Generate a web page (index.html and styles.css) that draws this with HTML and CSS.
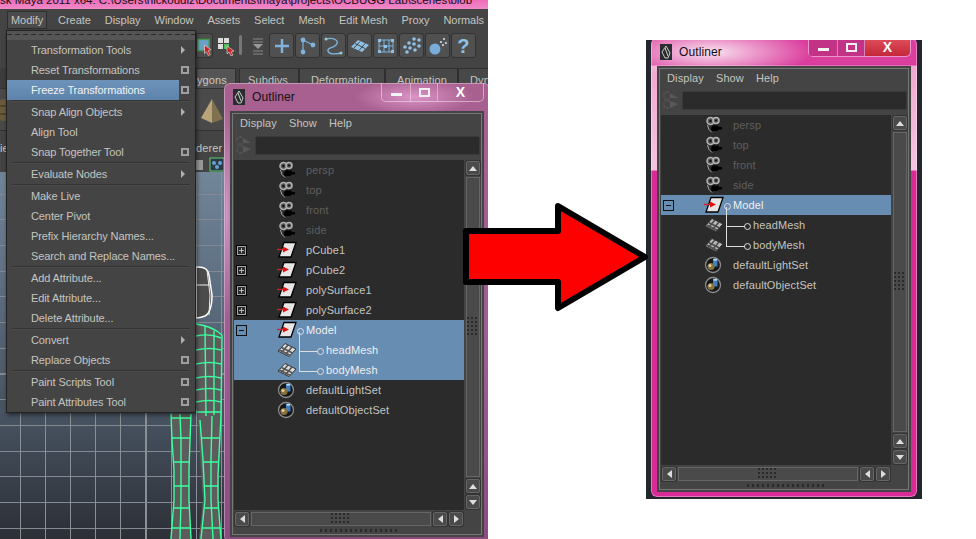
FILE: index.html
```html
<!DOCTYPE html>
<html lang="en">
<head>
<meta charset="utf-8">
<title>Outliner before and after</title>
<link rel="stylesheet" href="styles.css">
</head>
<body>
<svg class="defs" aria-hidden="true">
  <symbol id="cam" viewBox="0 0 20 18">
    <circle cx="6.500" cy="5" r="3.500" fill="#555" stroke="#b4b4b4" stroke-width="1.500"/>
    <circle cx="12" cy="4.500" r="3" fill="#555" stroke="#b4b4b4" stroke-width="1.500"/>
    <circle cx="6.500" cy="5" r="1.200" fill="#111"/><circle cx="12" cy="4.500" r="1" fill="#111"/>
    <path d="M7 12l1.500-2.500H14l1 1.500h3v2.500h-3l-2 1.500H9l-1.500 1z" fill="#000"/>
    <path d="M3.500 9q.5 5 4.500 7.500" fill="none" stroke="#aaa"/>
  </symbol>
  <symbol id="xf" viewBox="0 0 20 18">
    <path d="M7 1.500h12l-5 14.500H2z" fill="#e6e6e6" stroke="#000" stroke-width="1.300"/>
    <path d="M0 8.500h8" stroke="#c22" stroke-width="1.400"/><path d="M6 5.500l6 3-6 3z" fill="#d11"/>
  </symbol>
  <symbol id="mesh" viewBox="0 0 20 18">
    <path d="M8 2.500l11 5.500-7 7.500-11-5.500z" fill="#dcdcdc" stroke="#333"/>
    <path d="M4.500 6.500l11 5.500M2.500 9l11 5.500M11 4l-7 8M15 6l-7 8" stroke="#555" stroke-width="1.600"/>
  </symbol>
  <symbol id="set" viewBox="0 0 20 18">
    <circle cx="9" cy="9" r="7.500" fill="#161616" stroke="#8c8c8c" stroke-width="1.300"/>
    <path d="M9 3.500h4.500v7H9z" fill="#3f7fc0"/><ellipse cx="11.200" cy="3.800" rx="2.200" ry="1" fill="#b5d8f5"/>
    <circle cx="7" cy="10.500" r="3.600" fill="#85723f"/><circle cx="6" cy="9.500" r="1.500" fill="#ddd0a0"/>
  </symbol>
  <symbol id="filter" viewBox="0 0 16 18">
    <path d="M6 1H3L1 3v3M6 17H3l-2-2v-3" fill="none" stroke="#555" stroke-width="1.500" stroke-dasharray="3 1"/>
    <path d="M7 2l8 5-8 0zM7 10l8 3-8 4z" fill="#585858"/><path d="M1 7h6v4H1z" fill="#4c4c4c"/>
  </symbol>
  <symbol id="maya" viewBox="0 0 12 16">
    <rect width="12" height="16" fill="#2a2d30"/><path d="M6 2L2 8l3 6h3l2-5z" fill="none" stroke="#ccc"/><path d="M5 4l3 8" stroke="#ccc"/>
  </symbol>
</svg>

<main class="scene">
  <div class="app-title">sk Maya 2011 x64: C:\Users\nickoudiz\Documents\maya\projects\OCBUGG Lab\scenes\blob</div>

  <nav class="menubar">
    <span class="mb-item active">Modify</span>
    <span class="mb-item">Create</span>
    <span class="mb-item">Display</span>
    <span class="mb-item">Window</span>
    <span class="mb-item">Assets</span>
    <span class="mb-item">Select</span>
    <span class="mb-item">Mesh</span>
    <span class="mb-item">Edit Mesh</span>
    <span class="mb-item">Proxy</span>
    <span class="mb-item">Normals</span>
  </nav>

  <div class="toolbar">
    <span class="tool-btn">
      <svg width="18" height="20" viewBox="0 0 18 20"><rect x="2" y="3" width="12" height="12" fill="#6aa0c8" stroke="#3f9a4a" stroke-width="1.500"/><path d="M9 9l7 5-3 1 2 4-2 1-2-4-2 2z" fill="#c22" stroke="#eee" stroke-width=".6"/></svg>
    </span>
    <span class="tool-grid">
      <svg width="18" height="20" viewBox="0 0 18 20"><path d="M1 2h5v5H1zM7 2h5v5H7zM1 8h5v5H1z" fill="#ddd"/><path d="M7 8h5v5H7z" fill="#4fbf5f"/><path d="M10 10l7 5-3 1 2 3-2 1-2-4-2 2z" fill="#c22" stroke="#eee" stroke-width=".6"/></svg>
    </span>
    <span class="slider"></span>
    <svg class="collapse" width="10" height="20" viewBox="0 0 10 20"><path d="M0 3h10M0 6h10M0 15h10M0 18h10" stroke="#888"/><path d="M0 8h10l-5 5z" fill="#999"/></svg>
    <div class="tool-set">
      <span class="shelf-btn"><svg width="16" height="16" viewBox="0 0 16 16"><path d="M8 1v14M1 8h14" stroke="#7fb2dc" stroke-width="2.500"/></svg></span>
      <span class="shelf-btn"><svg width="20" height="20" viewBox="0 0 20 20"><path d="M5 4v12M5 4l10 5" stroke="#7fb2dc" stroke-width="1.200"/><circle cx="5" cy="4" r="2.400" fill="#7fb2dc"/><circle cx="5" cy="16" r="2.400" fill="#7fb2dc"/><circle cx="15" cy="9" r="2.400" fill="#7fb2dc"/></svg></span>
      <span class="shelf-btn"><svg width="20" height="20" viewBox="0 0 20 20"><path d="M2 3c8-2 14 2 10 6s-9 2-8 6 8 3 13 2" fill="none" stroke="#7fb2dc" stroke-width="1.400"/><circle cx="2" cy="3" r="1.500" fill="#9cc"/><circle cx="17" cy="17" r="1.500" fill="#9cc"/></svg></span>
      <span class="shelf-btn"><svg width="22" height="16" viewBox="0 0 22 16"><path d="M9 2l11 5-7 7L2 9z" fill="#8fc0e6"/><path d="M6 5.500l10 5M11 3.500l-6 6.500M16 5.500l-6 7" stroke="#444"/></svg></span>
      <span class="shelf-btn"><svg width="20" height="20" viewBox="0 0 20 20"><path d="M3 4h14v12H3zM8 4v12M13 4v12M3 10h14" fill="none" stroke="#7fb2dc"/><path d="M2 3h3v3H2zM15 3h3v3h-3zM2 14h3v3H2zM15 14h3v3h-3zM8 9h3v3H8z" fill="#8fc0e6"/></svg></span>
      <span class="shelf-btn"><svg width="20" height="20" viewBox="0 0 20 20" fill="#8fc0e6"><circle cx="12" cy="3" r="1.800"/><circle cx="17" cy="4" r="1.800"/><circle cx="7" cy="7" r="1.800"/><circle cx="12" cy="8" r="1.800"/><circle cx="17" cy="10" r="1.800"/><circle cx="3" cy="11" r="1.800"/><circle cx="8" cy="12" r="1.800"/><circle cx="13" cy="14" r="1.800"/><circle cx="5" cy="16" r="1.800"/></svg></span>
      <span class="shelf-btn"><svg width="20" height="20" viewBox="0 0 20 20"><circle cx="7" cy="13" r="5.500" fill="#79aedb"/><path d="M11 8l8-5v8l-6 3z" fill="#555"/><g fill="#cfe6f8"><circle cx="13" cy="6" r="1"/><circle cx="16" cy="3" r="1"/><circle cx="18" cy="7" r="1"/><circle cx="15" cy="9" r="1"/></g></svg></span>
      <span class="shelf-btn help">?</span>
    </div>
  </div>

  <div class="tabs">
    <span class="tab tab-poly">ygons</span>
    <span class="tab tab-sub">Subdivs</span>
    <span class="tab tab-def">Deformation</span>
    <span class="tab tab-ani">Animation</span>
    <span class="tab tab-dyn">Dyn</span>
  </div>

  <div class="shelf">
    <svg class="barrel" width="8" height="24" viewBox="0 0 8 24"><rect y="1" width="7" height="22" rx="3" fill="#6b5b3c"/><path d="M0 8h7M0 16h7" stroke="#3a3020"/></svg>
    <svg class="pyramid" width="24" height="26" viewBox="0 0 24 26"><path d="M12 1l11 20-11 4z" fill="#7f704f"/><path d="M12 1L1 20l11 5z" fill="#b8a67a"/></svg>
  </div>

  <div class="panelbar">
    <span class="pb-left">ie</span>
    <div class="pb-right">
      <span class="pb-text">derer</span>
      <svg class="pb-icons" width="30" height="16" viewBox="0 0 30 16"><rect x="0" y="3" width="7" height="10" fill="#999"/><rect x="14" y="1" width="14" height="13" fill="#2c3a45" stroke="#5fd06f"/><circle cx="18" cy="6" r="2" fill="#6aa0d8"/><circle cx="24" cy="6" r="2" fill="#6aa0d8"/><circle cx="21" cy="10" r="2" fill="#6aa0d8"/></svg>
    </div>
  </div>

  <div class="viewport"></div>

  <svg class="model" width="488" height="539" viewBox="0 0 488 539" aria-hidden="true">
    <path class="head" d="M196 267q12-1 13 8l3 20q0 17-7 21-5 2-9 2z"/>
    <path class="head-wire" d="M196 285h15M207 270l3 25-1 20"/>
    <path class="skin" d="M196 324q16 2 26 11l-1 80-1 45-2 40 3 39h-22l4-39-3-45-3-46h-1zM171 414h20l-1 40-1 46 2 39h-20l3-39-1-46z"/>
    <g class="wire">
      <path d="M196 324q16 2 26 11M196 336q14-3 25 2M196 350q14-3 25 0M196 364q14-3 25 0M196 378q14-3 25 0M196 390q14-3 25 0M196 402q14-3 25 0M196 412h25"/>
      <path d="M222 335l-1 80-3 60 0 25 3 39M205 326l1 90M214 331v84"/>
      <path d="M200 420l3 40 2 40-4 39M212 416l-1 44 0 40 2 39"/>
      <path d="M201 438h19M203 462h16M205 486h13M205 508h13M203 528h17"/>
      <path d="M171 414l1 26 2 30v30l-3 39M191 414l-1 26-1 30v30l2 39M180 414l1 26v60l-1 39"/>
      <path d="M171 418h20M172 438h18M174 462h15M174 486h15M174 508h15M172 528h18"/>
    </g>
  </svg>

  <aside class="menu">
    <div class="tearoff"></div>
    <div class="mi"><span class="ml">Transformation Tools</span><i class="arrow"></i></div>
    <div class="mi"><span class="ml">Reset Transformations</span><i class="opt"></i></div>
    <div class="mi"><span class="ml hot">Freeze Transformations</span><i class="opt"></i></div>
    <hr class="sep">
    <div class="mi"><span class="ml">Snap Align Objects</span><i class="arrow"></i></div>
    <div class="mi"><span class="ml">Align Tool</span></div>
    <div class="mi"><span class="ml">Snap Together Tool</span><i class="opt"></i></div>
    <hr class="sep">
    <div class="mi"><span class="ml">Evaluate Nodes</span><i class="arrow"></i></div>
    <hr class="sep">
    <div class="mi"><span class="ml">Make Live</span></div>
    <div class="mi"><span class="ml">Center Pivot</span></div>
    <div class="mi"><span class="ml">Prefix Hierarchy Names...</span></div>
    <div class="mi"><span class="ml">Search and Replace Names...</span></div>
    <hr class="sep">
    <div class="mi"><span class="ml">Add Attribute...</span></div>
    <div class="mi"><span class="ml">Edit Attribute...</span></div>
    <div class="mi"><span class="ml">Delete Attribute...</span></div>
    <hr class="sep">
    <div class="mi"><span class="ml">Convert</span><i class="arrow"></i></div>
    <div class="mi"><span class="ml">Replace Objects</span><i class="opt"></i></div>
    <hr class="sep">
    <div class="mi"><span class="ml">Paint Scripts Tool</span><i class="opt"></i></div>
    <div class="mi"><span class="ml">Paint Attributes Tool</span><i class="opt"></i></div>
  </aside>

  <section class="outliner before">
    <header class="win-title">
      <svg class="win-icon" width="12" height="16"><use href="#maya"/></svg>
      <span class="win-name">Outliner</span>
      <div class="caps"><span class="cap cap-min"><i></i></span><span class="cap cap-max"><i></i></span><span class="cap cap-close">X</span></div>
    </header>
    <div class="panel">
      <div class="o-menu"><span>Display</span><span>Show</span><span>Help</span></div>
      <div class="o-filter"><svg width="16" height="18"><use href="#filter"/></svg><span class="field"></span></div>
      <div class="o-body">
        <div class="list">
          <div class="row dim"><span></span><svg width="20" height="18"><use href="#cam"/></svg><span class="t">persp</span></div>
          <div class="row dim"><span></span><svg width="20" height="18"><use href="#cam"/></svg><span class="t">top</span></div>
          <div class="row dim"><span></span><svg width="20" height="18"><use href="#cam"/></svg><span class="t">front</span></div>
          <div class="row dim"><span></span><svg width="20" height="18"><use href="#cam"/></svg><span class="t">side</span></div>
          <div class="row"><span class="exp plus"></span><svg width="20" height="18"><use href="#xf"/></svg><span class="t">pCube1</span></div>
          <div class="row"><span class="exp plus"></span><svg width="20" height="18"><use href="#xf"/></svg><span class="t">pCube2</span></div>
          <div class="row"><span class="exp plus"></span><svg width="20" height="18"><use href="#xf"/></svg><span class="t">polySurface1</span></div>
          <div class="row"><span class="exp plus"></span><svg width="20" height="18"><use href="#xf"/></svg><span class="t">polySurface2</span></div>
          <div class="row sel parent"><span class="exp"></span><svg width="20" height="18"><use href="#xf"/></svg><span class="t">Model</span></div>
          <div class="row sel child"><span></span><svg width="20" height="18"><use href="#mesh"/></svg><span class="t">headMesh</span></div>
          <div class="row sel child"><span></span><svg width="20" height="18"><use href="#mesh"/></svg><span class="t">bodyMesh</span></div>
          <div class="row"><span></span><svg width="20" height="18"><use href="#set"/></svg><span class="t">defaultLightSet</span></div>
          <div class="row"><span></span><svg width="20" height="18"><use href="#set"/></svg><span class="t">defaultObjectSet</span></div>
        </div>
        <div class="vscroll">
          <span class="sb up"></span><span class="track"><i class="grip"></i></span><span class="sb up"></span><span class="sb down"></span>
        </div>
      </div>
      <div class="hscroll"><span class="sb left"></span><span class="track"><i class="grip"></i></span><span class="sb left"></span><span class="sb right"></span></div>
      <div class="foot"><i></i></div>
    </div>
  </section>
</main>

<section class="backdrop">
  <div class="outliner after">
    <header class="win-title">
      <svg class="win-icon" width="12" height="16"><use href="#maya"/></svg>
      <span class="win-name">Outliner</span>
      <div class="caps"><span class="cap cap-min"><i></i></span><span class="cap cap-max"><i></i></span><span class="cap cap-close">X</span></div>
    </header>
    <div class="panel">
      <div class="o-menu"><span>Display</span><span>Show</span><span>Help</span></div>
      <div class="o-filter"><svg width="16" height="18"><use href="#filter"/></svg><span class="field"></span></div>
      <div class="o-body">
        <div class="list">
          <div class="row dim"><span></span><svg width="20" height="18"><use href="#cam"/></svg><span class="t">persp</span></div>
          <div class="row dim"><span></span><svg width="20" height="18"><use href="#cam"/></svg><span class="t">top</span></div>
          <div class="row dim"><span></span><svg width="20" height="18"><use href="#cam"/></svg><span class="t">front</span></div>
          <div class="row dim"><span></span><svg width="20" height="18"><use href="#cam"/></svg><span class="t">side</span></div>
          <div class="row sel parent"><span class="exp"></span><svg width="20" height="18"><use href="#xf"/></svg><span class="t">Model</span></div>
          <div class="row child"><span></span><svg class="soft" width="20" height="18"><use href="#mesh"/></svg><span class="t">headMesh</span></div>
          <div class="row child"><span></span><svg class="soft" width="20" height="18"><use href="#mesh"/></svg><span class="t">bodyMesh</span></div>
          <div class="row"><span></span><svg width="20" height="18"><use href="#set"/></svg><span class="t">defaultLightSet</span></div>
          <div class="row"><span></span><svg width="20" height="18"><use href="#set"/></svg><span class="t">defaultObjectSet</span></div>
        </div>
        <div class="vscroll">
          <span class="sb up"></span><span class="track"><i class="grip"></i></span><span class="sb up"></span><span class="sb down"></span>
        </div>
      </div>
      <div class="hscroll"><span class="sb left"></span><span class="track"><i class="grip"></i></span><span class="sb left"></span><span class="sb right"></span></div>
      <div class="foot"><i></i></div>
    </div>
  </div>
</section>

<svg class="big-arrow" width="976" height="539" viewBox="0 0 976 539" aria-hidden="true">
  <path d="M466 231H558V206L645 257 558 308V282H466z" fill="#f00" stroke="#000" stroke-width="6" stroke-linejoin="round"/>
</svg>
</body>
</html>
```

FILE: styles.css
```css
* { box-sizing: border-box; }
html, body { margin: 0; height: 100%; background: #fff; overflow: hidden; }
body { font: 11px/20px "Liberation Sans", Arial, sans-serif; letter-spacing: .12px; color: #c4c4c0; position: relative; width: 976px; height: 539px; }
.defs { position: absolute; width: 0; height: 0; }

/* Maya main window */
.scene { position: absolute; left: 0; top: 0; width: 488px; height: 539px; overflow: hidden; display: flex; flex-direction: column; background: #444; }
.app-title { height: 9px; flex: none; overflow: hidden; background: linear-gradient(#ee6cb8, #f08ac8); color: #111; font-size: 11.500px; letter-spacing: 0; line-height: 1px; white-space: nowrap; }
.menubar { height: 21px; flex: none; display: flex; gap: 6px; padding: 2px 0 0 7px; background: #444; letter-spacing: -.05px; }
.mb-item { height: 18px; line-height: 18px; padding: 0 4px; white-space: nowrap; }
.mb-item.active { background: #4c4c4c; box-shadow: inset 0 0 0 1px #2e2e2e; margin-right: 1px; }

.toolbar { height: 38px; flex: none; display: flex; align-items: flex-start; padding: 3px 0 0 196px; background: #444; }
.tool-btn { width: 17px; height: 25px; display: flex; align-items: center; justify-content: center; background: #4e4e4e; border-radius: 0 3px 3px 0; box-shadow: inset 0 0 0 1px #333; }
.tool-grid { margin-left: 4px; width: 18px; height: 25px; display: flex; align-items: center; }
.slider { width: 3px; height: 20px; margin: 2px 0 0 4px; background: #777; border-radius: 2px; }
.collapse { margin: 3px 0 0 11px; }
.tool-set { display: flex; margin-left: 6px; }
.shelf-btn { width: 25px; height: 25px; margin-right: 1px; display: flex; align-items: center; justify-content: center; background: #505050; border: 1px solid #333; border-radius: 3px; }
.help { color: #8fc0e6; font-size: 20px; font-weight: 700; }

.tabs { height: 20px; flex: none; display: flex; background: #3d3d3d; }
.tab { height: 20px; line-height: 22px; border: 1px solid #2f2f2f; border-bottom: 0; background: #484848; padding-left: 8px; flex: none; }
.tab-poly { margin-left: 196px; width: 40px; padding-left: 0; color: #c8c8c8; background: #555; }
.tab-sub { margin-left: 3px; width: 60px; }
.tab-def { width: 86px; padding-left: 11px; }
.tab-ani { width: 73px; padding-left: 11px; }
.tab-dyn { width: 40px; padding-left: 11px; }

.shelf { height: 42px; flex: none; display: flex; align-items: flex-start; padding-top: 9px; background: #4a4a4a; border-top: 1px solid #333; }
.pyramid { margin-left: 192px; }
.panelbar { height: 42px; flex: none; display: flex; align-items: flex-start; background: #444; border-top: 1px solid #333; }
.pb-left { width: 196px; margin-top: 7px; }
.pb-right { display: flex; flex-direction: column; }
.pb-text { height: 20px; margin-top: 7px; }
.pb-icons { margin-top: -1px; }
.viewport { flex: 1; background:
  repeating-linear-gradient(90deg, transparent 0 24px, #8a8f96 24px 25.100px),
  repeating-linear-gradient(180deg, transparent 0 24.600px, #858a92 24.600px 25.700px),
  linear-gradient(#728699 0, #5a6b7d 130px, #46515f 250px, #2c2f36 100%);
  background-position: -4px 0, 0 -3px, 0 0; }

.model { position: absolute; left: 0; top: 0; }
.head { fill: #4b4b4b; stroke: #fff; stroke-width: 1.500; }
.head-wire { fill: none; stroke: #eee; }
.skin { fill: #5c5c5c; }
.wire { fill: none; stroke: #3dffa0; stroke-width: 1.400; }

/* Modify menu */
.menu { position: absolute; left: 6px; top: 30px; width: 190px; background: #444; border: 1px solid #222; box-shadow: 1px 2px 4px rgba(0,0,0,.5); letter-spacing: -.1px; }
.tearoff { height: 9px; background-image: repeating-linear-gradient(90deg, #2a2a2a 0 5px, transparent 5px 8px), linear-gradient(#555, #555); background-size: 100% 1px, 100% 100%; background-position: 0 3px, 0 0; background-repeat: no-repeat; }
.mi { height: 20px; display: flex; align-items: center; }
.ml { width: 172px; height: 20px; padding-left: 24px; flex: none; white-space: nowrap; }
.ml.hot { background: linear-gradient(#6d93bb, #5d83ab); color: #f2f2f2; }
.arrow { width: 0; height: 0; margin-left: 2px; border-left: 4px solid #b0b0b0; border-top: 4px solid transparent; border-bottom: 4px solid transparent; }
.opt { width: 8px; height: 8px; margin-left: 2px; border: 2px solid #a0a0a0; background: #444; }
.sep { height: 2px; margin: 0 5px; border: 0; border-top: 1px solid #333; border-bottom: 1px solid #4d4d4d; }

/* Outliner windows */
.outliner { width: 266px; height: 459px; display: flex; flex-direction: column; padding: 0 6px 5px; border-radius: 6px; box-shadow: inset 0 0 0 1px rgba(255,255,255,.35); }
.before { position: absolute; left: 224px; top: 83px; background:
  radial-gradient(ellipse 60px 18px at 190px 14px, rgba(240,170,220,.7), transparent),
  radial-gradient(ellipse 8px 110px at 3px 130px, rgba(230,190,230,.6), transparent),
  linear-gradient(#a8608f, #9d5c93 60%, #8b4a80); }
.after { margin-top: -2px; background:
  radial-gradient(ellipse 100px 26px at 60px 14px, rgba(255,255,255,.85), transparent),
  linear-gradient(#db3f9e 0 26px, #d8359c 27px, #f0a8d0 28px, #f6c4e0 132px, #d92b97 133px, #d92b97 100%); }
.win-title { height: 28px; flex: none; display: flex; align-items: flex-start; }
.win-icon { margin: 6px 0 0 3px; flex: none; }
.win-name { margin: 4px 0 0 7px; font-size: 12px; color: #111; }
.caps { margin-left: auto; display: flex; flex: none; width: 103px; height: 19px; border: 1px solid rgba(255,255,255,.45); border-top: 0; border-radius: 0 0 5px 5px; }
.cap { display: flex; align-items: center; justify-content: center; border-right: 1px solid rgba(255,255,255,.4); color: #fff; }
.cap-min { width: 29px; }
.cap-min i { width: 11px; height: 3px; margin-top: 4px; background: #f4f4f4; }
.cap-max { width: 27px; }
.cap-max i { width: 11px; height: 9px; border: 2px solid #f0f0f0; }
.cap-close { flex: 1; border-right: 0; font-weight: 700; font-size: 14px; }
.after .cap-close { background: linear-gradient(#e0505c, #c42838); border-radius: 0 0 5px 0; }
.after .cap-min, .after .cap-max { background: rgba(170,40,110,.5); }

.panel { flex: 1; min-height: 0; display: flex; flex-direction: column; padding: 0 2px; border: 2px solid #444; background: #444; box-shadow: inset 0 0 0 1px #777; }
.o-menu { height: 20px; flex: none; display: flex; gap: 12px; padding-left: 6px; }
.o-filter { height: 19px; flex: none; margin: 3px 0 5px; display: flex; padding-left: 2px; gap: 3px; }
.field { flex: 1; height: 19px; background: #2b2b2b; border: 1px solid #3a3a3a; border-radius: 2px; }
.o-body { height: 350px; flex: none; display: flex; gap: 2px; }
.list { width: 230px; background: #2b2b2b; flex: none; }
.row { height: 20px; display: grid; grid-template-columns: 2px 11px 30px 20px 9px 1fr; align-items: center; position: relative; }
.row > span:first-child { grid-column: 2; }
.row > svg { grid-column: 4; }
.row > svg.soft { opacity: .8; }
.t { grid-column: 6; white-space: nowrap; }
.dim .t { color: #5f5f5f; }
.sel { background: #678db3; }
.sel .t { color: #f0f0f0; }
.exp { width: 11px; height: 11px; border: 1px solid #000; box-shadow: inset 0 0 0 1px #a8a8a8; position: relative; display: block; }
.exp::before { content: ""; position: absolute; left: 2px; right: 2px; top: 4px; height: 1px; background: #b8b8b8; }
.exp.plus::after { content: ""; position: absolute; top: 2px; bottom: 2px; left: 4px; width: 1px; background: #b8b8b8; }
.sel .exp { box-shadow: none; border-color: #111; }
.sel .exp::before { background: #111; }
.parent::after { content: ""; position: absolute; left: 63px; top: 8px; width: 5px; height: 5px; border: 1px solid #dde; border-radius: 50%; }
.child .t { padding-left: 20px; }
.child::before { content: ""; position: absolute; left: 65px; top: -8px; width: 18px; height: 19px; border-left: 1px solid #ddd; border-bottom: 1px solid #ddd; }
.child::after { content: ""; position: absolute; left: 83px; top: 8px; width: 5px; height: 5px; border: 1px solid #ddd; border-radius: 50%; }
.child + .child::before { top: -12px; height: 23px; }

.vscroll { width: 14px; flex: none; display: flex; flex-direction: column; gap: 2px; padding: 1px 0; }
.sb { flex: none; width: 14px; height: 14px; background: #4a4a4a; border: 1px solid #666; border-radius: 2px; box-shadow: 0 0 0 1px #333; display: flex; align-items: center; justify-content: center; }
.sb::before { content: ""; width: 0; height: 0; border: 4px solid transparent; }
.up::before { border-top: 0; border-bottom: 5px solid #ddd; }
.down::before { border-bottom: 0; border-top: 5px solid #ddd; }
.left::before { border-left: 0; border-right: 5px solid #ddd; }
.right::before { border-right: 0; border-left: 5px solid #ddd; }
.track { flex: 1; background: #4a4a4a; border: 1px solid #666; display: flex; align-items: center; justify-content: center; }
.vscroll .grip { width: 12px; height: 20px; }
.hscroll .grip { width: 20px; height: 12px; }
.grip { background-image: radial-gradient(circle at 1px 1px, #2a2a2a 1px, transparent 1.200px); background-size: 4px 4px; }
.hscroll { height: 14px; flex: none; width: 230px; margin-top: 2px; padding: 0 1px; display: flex; gap: 2px; }
.foot { flex: 1; display: flex; justify-content: center; align-items: center; width: 250px; }
.foot i { width: 78px; height: 3px; background-image: linear-gradient(90deg, #2a2a2a 0 2px, transparent 2px 5px); background-size: 5px 3px; }

/* Right copy */
.backdrop { position: absolute; left: 646px; top: 40px; width: 276px; height: 459px; padding-left: 5px; overflow: hidden; background: #23272d; }

.big-arrow { position: absolute; left: 0; top: 0; pointer-events: none; }
```
